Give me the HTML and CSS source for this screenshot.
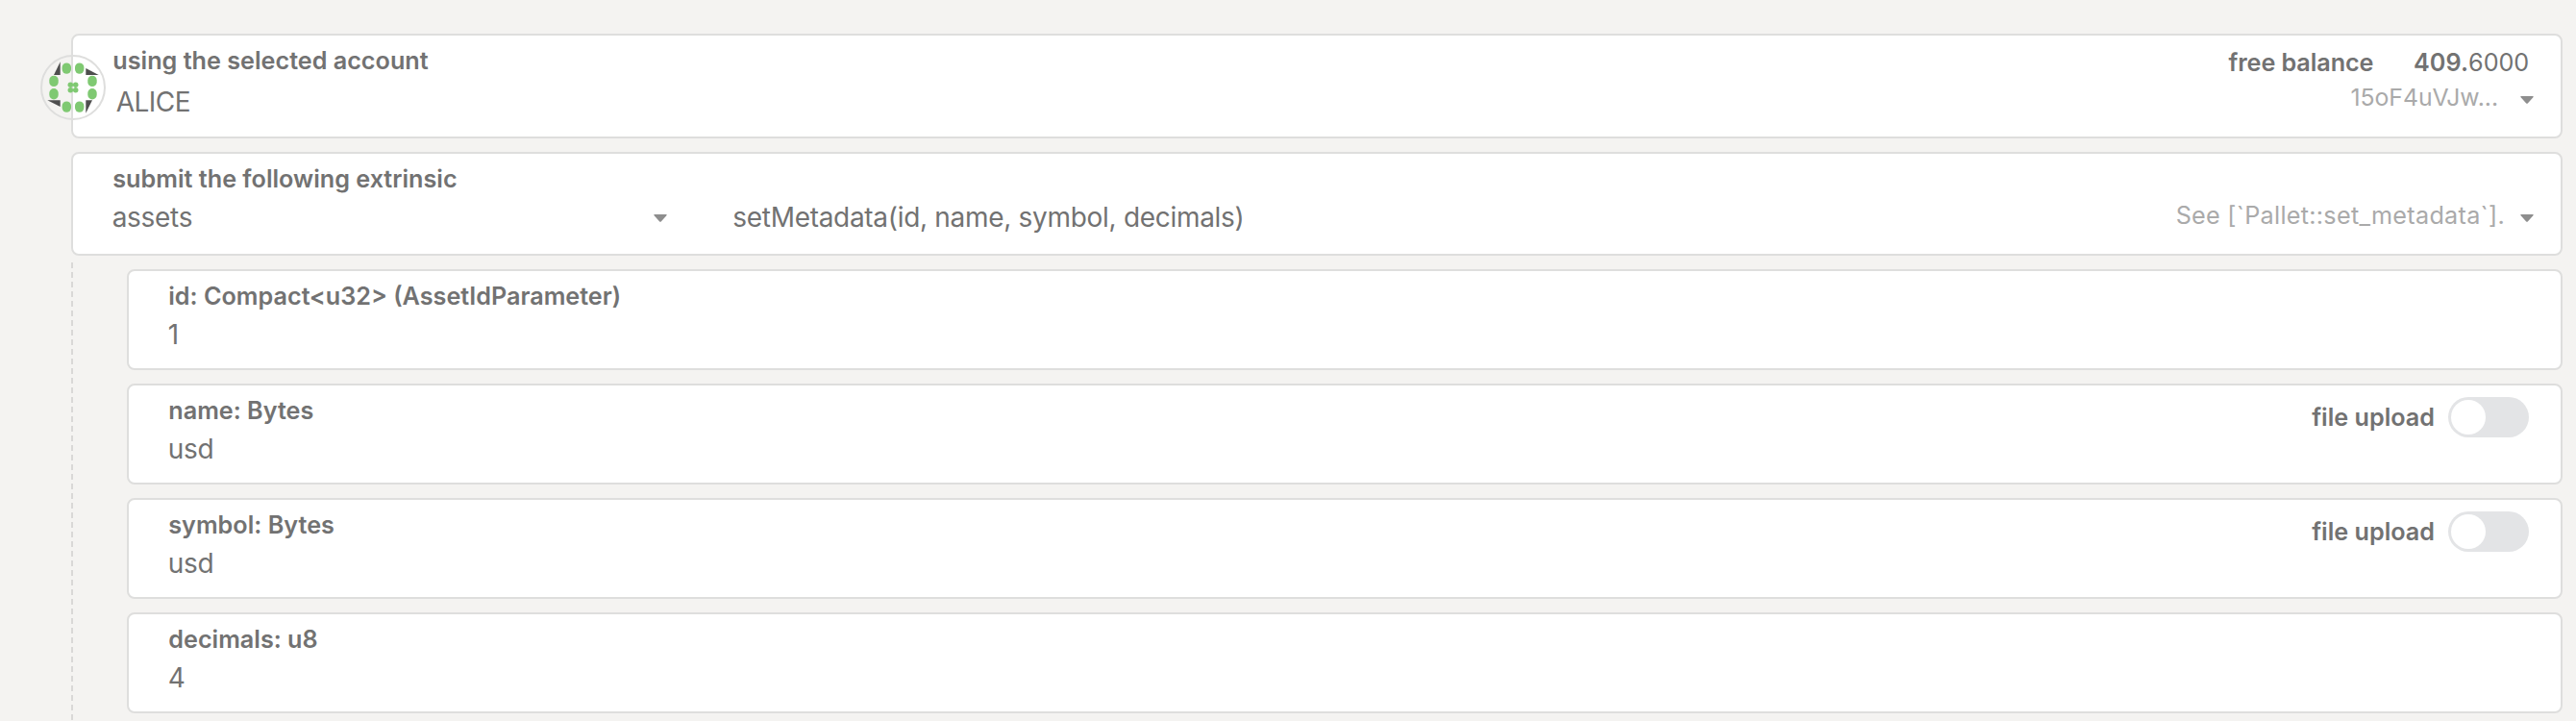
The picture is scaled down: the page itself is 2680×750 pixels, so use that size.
FILE: index.html
```html
<!DOCTYPE html>
<html lang="en">
<head>
<meta charset="utf-8">
<title>Extrinsics</title>
<link rel="stylesheet" href="styles.css">
</head>
<body>
<main class="page">
  <section class="card card-account">
    <svg class="identicon" viewBox="0 0 68 68">
      <circle cx="34" cy="34" r="33" fill="none" stroke="#dededd" stroke-width="2"/>
      <g fill="#4e4e4e">
        <path d="M20.7 7.3V21H14z"/>
        <path d="M47.3 14V21H60.7z"/>
        <path d="M7.3 47.3H20.7V54z"/>
        <path d="M47.3 47.3H54L47.3 60.7z"/>
      </g>
      <g fill="#7fc972">
        <rect x="22.6" y="8.4" width="9.4" height="11.4" rx="4.7"/>
        <rect x="36" y="8.4" width="9.4" height="11.4" rx="4.7"/>
        <rect x="9.3" y="21.7" width="9.4" height="11.4" rx="4.7"/>
        <rect x="49.3" y="21.7" width="9.4" height="11.4" rx="4.7"/>
        <rect x="9.3" y="35" width="9.4" height="11.4" rx="4.7"/>
        <rect x="49.3" y="35" width="9.4" height="11.4" rx="4.7"/>
        <rect x="22.6" y="48.4" width="9.4" height="11.4" rx="4.7"/>
        <rect x="36" y="48.4" width="9.4" height="11.4" rx="4.7"/>
        <circle cx="31.3" cy="31.3" r="2.75"/>
        <circle cx="36.7" cy="31.3" r="2.75"/>
        <circle cx="31.3" cy="36.7" r="2.75"/>
        <circle cx="36.7" cy="36.7" r="2.75"/>
      </g>
    </svg>
    <div class="main">
      <div class="label">using the selected account</div>
      <div class="value account-name">ALICE</div>
    </div>
    <div class="side">
      <div class="balance"><span class="label">free balance</span><span class="amount"><b>409.</b>6000</span></div>
      <div class="hint-row"><span class="address">15oF4uVJw...</span><svg class="caret" viewBox="0 0 14 8"><path d="M1 0H13Q14.3 .3 13.4 1.3L8 7.3Q7 8.3 6 7.3L.6 1.3Q-.3 .3 1 0z"/></svg></div>
    </div>
  </section>

  <section class="card card-extrinsic">
    <div class="main">
      <div class="label">submit the following extrinsic</div>
      <div class="selects">
        <div class="value select-section"><span>assets</span><svg class="caret" viewBox="0 0 14 8"><path d="M1 0H13Q14.3 .3 13.4 1.3L8 7.3Q7 8.3 6 7.3L.6 1.3Q-.3 .3 1 0z"/></svg></div>
        <div class="value">setMetadata(id, name, symbol, decimals)</div>
      </div>
    </div>
    <div class="side">
      <div class="hint-row"><span class="docs">See [`Pallet::set_metadata`].</span><svg class="caret" viewBox="0 0 14 8"><path d="M1 0H13Q14.3 .3 13.4 1.3L8 7.3Q7 8.3 6 7.3L.6 1.3Q-.3 .3 1 0z"/></svg></div>
    </div>
  </section>

  <div class="params">
    <section class="card">
      <div class="main">
        <div class="label">id: Compact&lt;u32&gt; (AssetIdParameter)</div>
        <div class="value">1</div>
      </div>
    </section>
    <section class="card">
      <div class="main">
        <div class="label">name: Bytes</div>
        <div class="value">usd</div>
      </div>
      <div class="upload"><span class="label">file upload</span><span class="toggle"><span class="knob"></span></span></div>
    </section>
    <section class="card">
      <div class="main">
        <div class="label">symbol: Bytes</div>
        <div class="value">usd</div>
      </div>
      <div class="upload"><span class="label">file upload</span><span class="toggle"><span class="knob"></span></span></div>
    </section>
    <section class="card">
      <div class="main">
        <div class="label">decimals: u8</div>
        <div class="value">4</div>
      </div>
    </section>
  </div>
</main>
</body>
</html>
```
FILE: styles.css
```css
* { box-sizing: border-box; }
body {
  margin: 0;
  background: #f4f3f1;
  color: #727272;
  font-family: Inter, "Liberation Sans", sans-serif;
  overflow: hidden;
}
.page {
  display: flex;
  flex-direction: column;
  gap: 14px;
  height: 750px;
  padding: 35px 14px 0 74px;
}
.card {
  position: relative;
  display: flex;
  flex: none;
  justify-content: space-between;
  height: 105px;
  padding: 11px 33px 0 40.7px;
  background: #fff;
  border: 2px solid #dededd;
  border-radius: 8px;
}
.card-account { height: 109px; }
.card-extrinsic { height: 108px; }
.label {
  font-size: 25.2px;
  font-weight: 600;
  line-height: 30px;
  white-space: nowrap;
}
.main .label { padding-left: 0.6px; }
.value {
  margin-top: 8px;
  font-size: 28px;
  line-height: 34px;
  letter-spacing: -0.3px;
  white-space: nowrap;
}
.account-name { margin: 11px 0 0 4px; letter-spacing: -0.5px; }
.identicon {
  position: absolute;
  left: -34px;
  top: 20px;
  width: 68px;
  height: 68px;
}
.side {
  display: flex;
  flex-direction: column;
  align-items: flex-end;
}
.balance {
  display: flex;
  gap: 41.5px;
  padding-top: 1.5px;
}
.balance .label { letter-spacing: -0.08px; }
.amount { font-size: 25.2px; line-height: 30px; letter-spacing: -0.1px; }
.amount b { font-weight: 600; letter-spacing: 0.1px; }
.hint-row {
  display: flex;
  align-items: center;
  margin-right: -5px;
  line-height: 30px;
  color: #aaa;
}
.card-account .hint-row { gap: 23px; margin-top: 6.5px; }
.card-extrinsic .hint-row { gap: 16px; margin-top: 38px; }
.address { font-size: 24.8px; letter-spacing: -0.05px; }
.docs { font-size: 25.2px; letter-spacing: 0.28px; }
.caret {
  display: block;
  width: 14px;
  height: 8px;
  margin-top: 6px;
  fill: #8e8e8e;
}
.selects { display: flex; gap: 68px; }
.select-section {
  display: flex;
  align-items: center;
  justify-content: space-between;
  width: 577.6px;
}
.select-section .caret { margin-top: 2px; }
.params {
  position: relative;
  display: flex;
  flex: 1;
  flex-direction: column;
  gap: 14px;
  padding-left: 58px;
}
/* dashed guide linking the parameters to their call */
.params::before {
  content: "";
  position: absolute;
  left: 0;
  top: -7px;
  bottom: 0;
  width: 2px;
  background: repeating-linear-gradient(to bottom, #d9d8d7 0 6px, transparent 6px 10px);
}
.upload {
  display: flex;
  gap: 14px;
  height: 42px;
  margin-top: 1px;
  align-items: center;
}
.toggle {
  width: 84px;
  height: 42px;
  padding: 3px;
  border-radius: 21px;
  background: #e3e4e6;
}
.knob {
  display: block;
  width: 36px;
  height: 36px;
  border-radius: 50%;
  background: #fff;
}
```
